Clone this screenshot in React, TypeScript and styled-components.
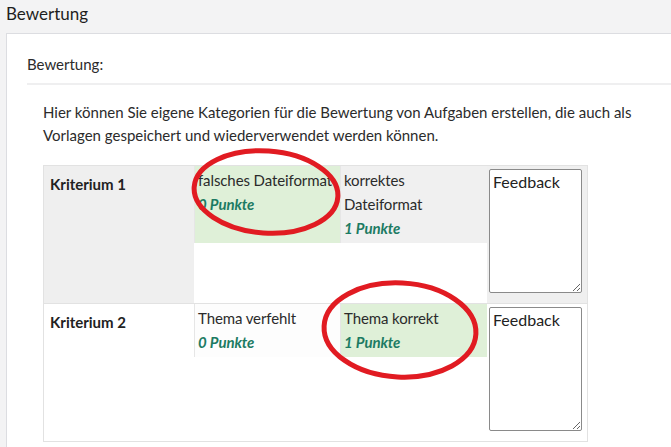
import React from "react";
import styled, { createGlobalStyle } from "styled-components";

const GlobalStyle = createGlobalStyle`
  body {
    margin: 0;
    background: #f3f3f4;
    font-family: Lato, "Liberation Sans", sans-serif;
    color: #212529;
    overflow: hidden;
  }
`;

interface Level {
  label: string;
  points: number;
  selected?: boolean;
}

interface Criterion {
  name: string;
  levels: Level[];
  active?: boolean;
}

const criteria: Criterion[] = [
  {
    name: "Kriterium 1",
    active: true,
    levels: [
      { label: "falsches Dateiformat", points: 0, selected: true },
      { label: "korrektes Dateiformat", points: 1 },
    ],
  },
  {
    name: "Kriterium 2",
    levels: [
      { label: "Thema verfehlt", points: 0 },
      { label: "Thema korrekt", points: 1, selected: true },
    ],
  },
];

const App: React.FC = () => {
  return (
    <Page>
      <GlobalStyle />
      <Header>Bewertung</Header>
      <Card>
        <CardTitle>Bewertung:</CardTitle>
        <CardBody>
          <Intro>
            Hier können Sie eigene Kategorien für die Bewertung von Aufgaben erstellen, die auch als
            Vorlagen gespeichert und wiederverwendet werden können.
          </Intro>
          <Rubric>
            {criteria.map((c) => (
              <Row key={c.name} active={c.active}>
                <Name>{c.name}</Name>
                <Levels>
                  {c.levels.map((l) => (
                    <LevelBox key={l.label} selected={l.selected} active={c.active}>
                      <div>{l.label}</div>
                      <Points>{l.points} Punkte</Points>
                    </LevelBox>
                  ))}
                </Levels>
                <FeedbackCell>
                  <Feedback defaultValue="Feedback" />
                </FeedbackCell>
              </Row>
            ))}
          </Rubric>
        </CardBody>
      </Card>

      {/* red annotation circles drawn on top of the screenshot */}
      <Marks width="671" height="447" viewBox="0 0 671 447">
        <ellipse cx="266" cy="192" rx="72" ry="41" transform="rotate(4 266 192)" />
        <ellipse cx="400" cy="330" rx="76" ry="47" transform="rotate(3 400 330)" />
      </Marks>
    </Page>
  );
};

const Page = styled.div`
  position: relative;
  width: 671px;
  height: 447px;
  overflow: hidden;
`;

const Header = styled.div`
  height: 33px;
  box-sizing: border-box;
  padding: 3px 6px 0;
  font-size: 17px;
  line-height: 22px;
  color: #1e1e1e;
`;

const Card = styled.div`
  margin-left: 6px;
  width: 720px;
  height: 420px;
  background: #fff;
  border-top: 1px solid #dcdde1;
  border-left: 1px solid #dcdde1;
  padding-left: 20px;
  box-sizing: border-box;
`;

const CardTitle = styled.div`
  height: 51px;
  box-sizing: border-box;
  padding-top: 19px;
  font-size: 15px;
  line-height: 22px;
  color: #2b2b2b;
  border-bottom: 2px solid #efeff0;
`;

const CardBody = styled.div`
  padding: 16px 0 0 16px;
`;

const Intro = styled.p`
  margin: 0 0 18px;
  width: 600px;
  font-size: 15px;
  line-height: 23px;
  color: #2b2b2b;
`;

const Rubric = styled.div`
  width: 543px;
  border: 1px solid #e2e2e2;
  border-top: none;
`;

const Row = styled.div<{ active?: boolean }>`
  display: grid;
  grid-template-columns: 150px 293px 1fr;
  height: 138px;
  border-top: 1px solid #e2e2e2;
  box-sizing: border-box;
  background: ${({ active }) => (active ? "#efefef" : "#fff")};
`;

const Name = styled.div`
  padding: 8px 6px;
  font-size: 15px;
  font-weight: 700;
  line-height: 20px;
  color: #222;
`;

const Levels = styled.div`
  display: grid;
  grid-template-columns: 146px 147px;
  align-content: start;
  background: #fff;
`;

const LevelBox = styled.div<{ selected?: boolean; active?: boolean }>`
  padding: 2px 1px 3px 3px;
  font-size: 15px;
  line-height: 24px;
  color: #2b2b2b;
  letter-spacing: -0.1px;
  border-left: 1px solid #e6e6e6;
  background: ${({ selected, active }) =>
    selected ? "#dff0d8" : active ? "#f0f0f0" : "#fdfdfd"};
`;

const Points = styled.div`
  font-weight: 700;
  font-style: italic;
  color: #1c7b63;
`;

const FeedbackCell = styled.div`
  padding: 3px 4px 10px 2px;
`;

const Feedback = styled.textarea`
  display: block;
  width: 93px;
  height: 124px;
  box-sizing: border-box;
  border: 1px solid #8a8a8a;
  border-radius: 2px;
  padding: 2px 3px;
  font-family: Lato, "Liberation Sans", sans-serif;
  font-size: 16px;
  line-height: 20px;
  color: #222;
  background: #fff;
  resize: vertical;
`;

const Marks = styled.svg`
  position: absolute;
  left: 0;
  top: 0;
  pointer-events: none;

  ellipse {
    fill: none;
    stroke: #e11b22;
    stroke-width: 5;
  }
`;

export default App;
